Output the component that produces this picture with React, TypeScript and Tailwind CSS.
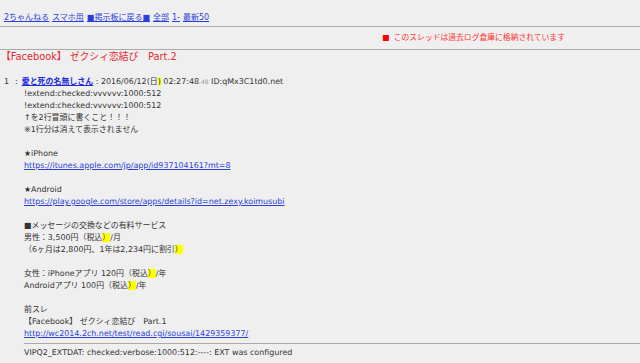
import React from 'react';

// スレッド表示（過去ログ）
const font = "font-['DejaVu_Sans','Noto_Sans_CJK_JP',sans-serif]";

const navLinks = ['2ちゃんねる', 'スマホ用', '■掲示板に戻る■', '全部', '1-', '最新50'];

function Hl({ children }: { children: React.ReactNode }) {
  return <span className="bg-[#ffff00]">{children}</span>;
}

function Link({ href }: { href: string }) {
  return (
    <a href="#" className="text-[#2b3fd8] underline">
      {href}
    </a>
  );
}

export default function App() {
  return (
    <div className={`min-h-[363px] bg-[#efefef] text-[#333] ${font} text-[7.95px] leading-[12px]`}>
      {/* Header navigation */}
      <div className="h-[26px] flex items-end gap-[3px] px-[4px] pb-[2px] text-[8px]">
        {navLinks.map((l) => (
          <a key={l} href="#" className="text-[#2b3fd8] underline">
            {l}
          </a>
        ))}
      </div>
      <div className="border-t border-[#aaa]" />

      {/* 過去ログ notice */}
      <div className="h-[22px] flex items-center justify-end pr-[75px] text-[#f33] text-[7.8px]">
        <span className="text-[#f00] mr-[4px]">■</span>
        <span>このスレッドは過去ログ倉庫に格納されています</span>
      </div>
      <div className="border-t border-[#aaa]" />

      <h1 className="pt-[2px] pl-[1px] text-[9.8px] leading-[10px] text-[#e8282d] font-normal">
        【Facebook】 ゼクシィ恋結び　Part.2
      </h1>

      {/* Post #1 */}
      <div className="mt-[14px]">
        <div className="flex px-[4px] whitespace-pre">
          <span>1</span>
          <span className="ml-[6px]">:</span>
          <a href="#" className="ml-[4px] font-bold text-[#1a2cdc] underline">
            愛と死の名無しさん
          </a>
          <span>
            {' : 2016/06/12(日'}
            <Hl>)</Hl>
            {' 02:27:48'}
          </span>
          <span className="text-[6px] text-[#999]">.48</span>
          <span> ID:qMx3C1td0.net</span>
        </div>
        <div className="pl-[24px]">
          <div>!extend:checked:vvvvvv:1000:512</div>
          <div>!extend:checked:vvvvvv:1000:512</div>
          <div>↑を2行冒頭に書くこと！！！</div>
          <div>※1行分は消えて表示されません</div>
          <div className="h-[12px]" />
          <div>★iPhone</div>
          <div>
            <Link href="https://itunes.apple.com/jp/app/id937104161?mt=8" />
          </div>
          <div className="h-[12px]" />
          <div>★Android</div>
          <div>
            <Link href="https://play.google.com/store/apps/details?id=net.zexy.koimusubi" />
          </div>
          <div className="h-[12px]" />
          <div>■メッセージの交換などの有料サービス</div>
          <div>
            男性：3,500円（税込<Hl>）</Hl>/月
          </div>
          <div>
            （6ヶ月は2,800円、1年は2,234円に割引<Hl>）</Hl>
          </div>
          <div className="h-[12px]" />
          <div>
            女性：iPhoneアプリ 120円（税込<Hl>）</Hl>/年
          </div>
          <div>
            Androidアプリ 100円（税込<Hl>）</Hl>/年
          </div>
          <div className="h-[12px]" />
          <div>前スレ</div>
          <div>【Facebook】 ゼクシィ恋結び　Part.1</div>
          <div>
            <Link href="http://wc2014.2ch.net/test/read.cgi/sousai/1429359377/" />
          </div>
        </div>
        <div className="ml-[24px] mt-[3px] border-t border-[#aaa]" />
        <div className="pl-[24px] mt-[3px]">
          VIPQ2_EXTDAT: checked:verbose:1000:512:----: EXT was configured
        </div>
      </div>
    </div>
  );
}
